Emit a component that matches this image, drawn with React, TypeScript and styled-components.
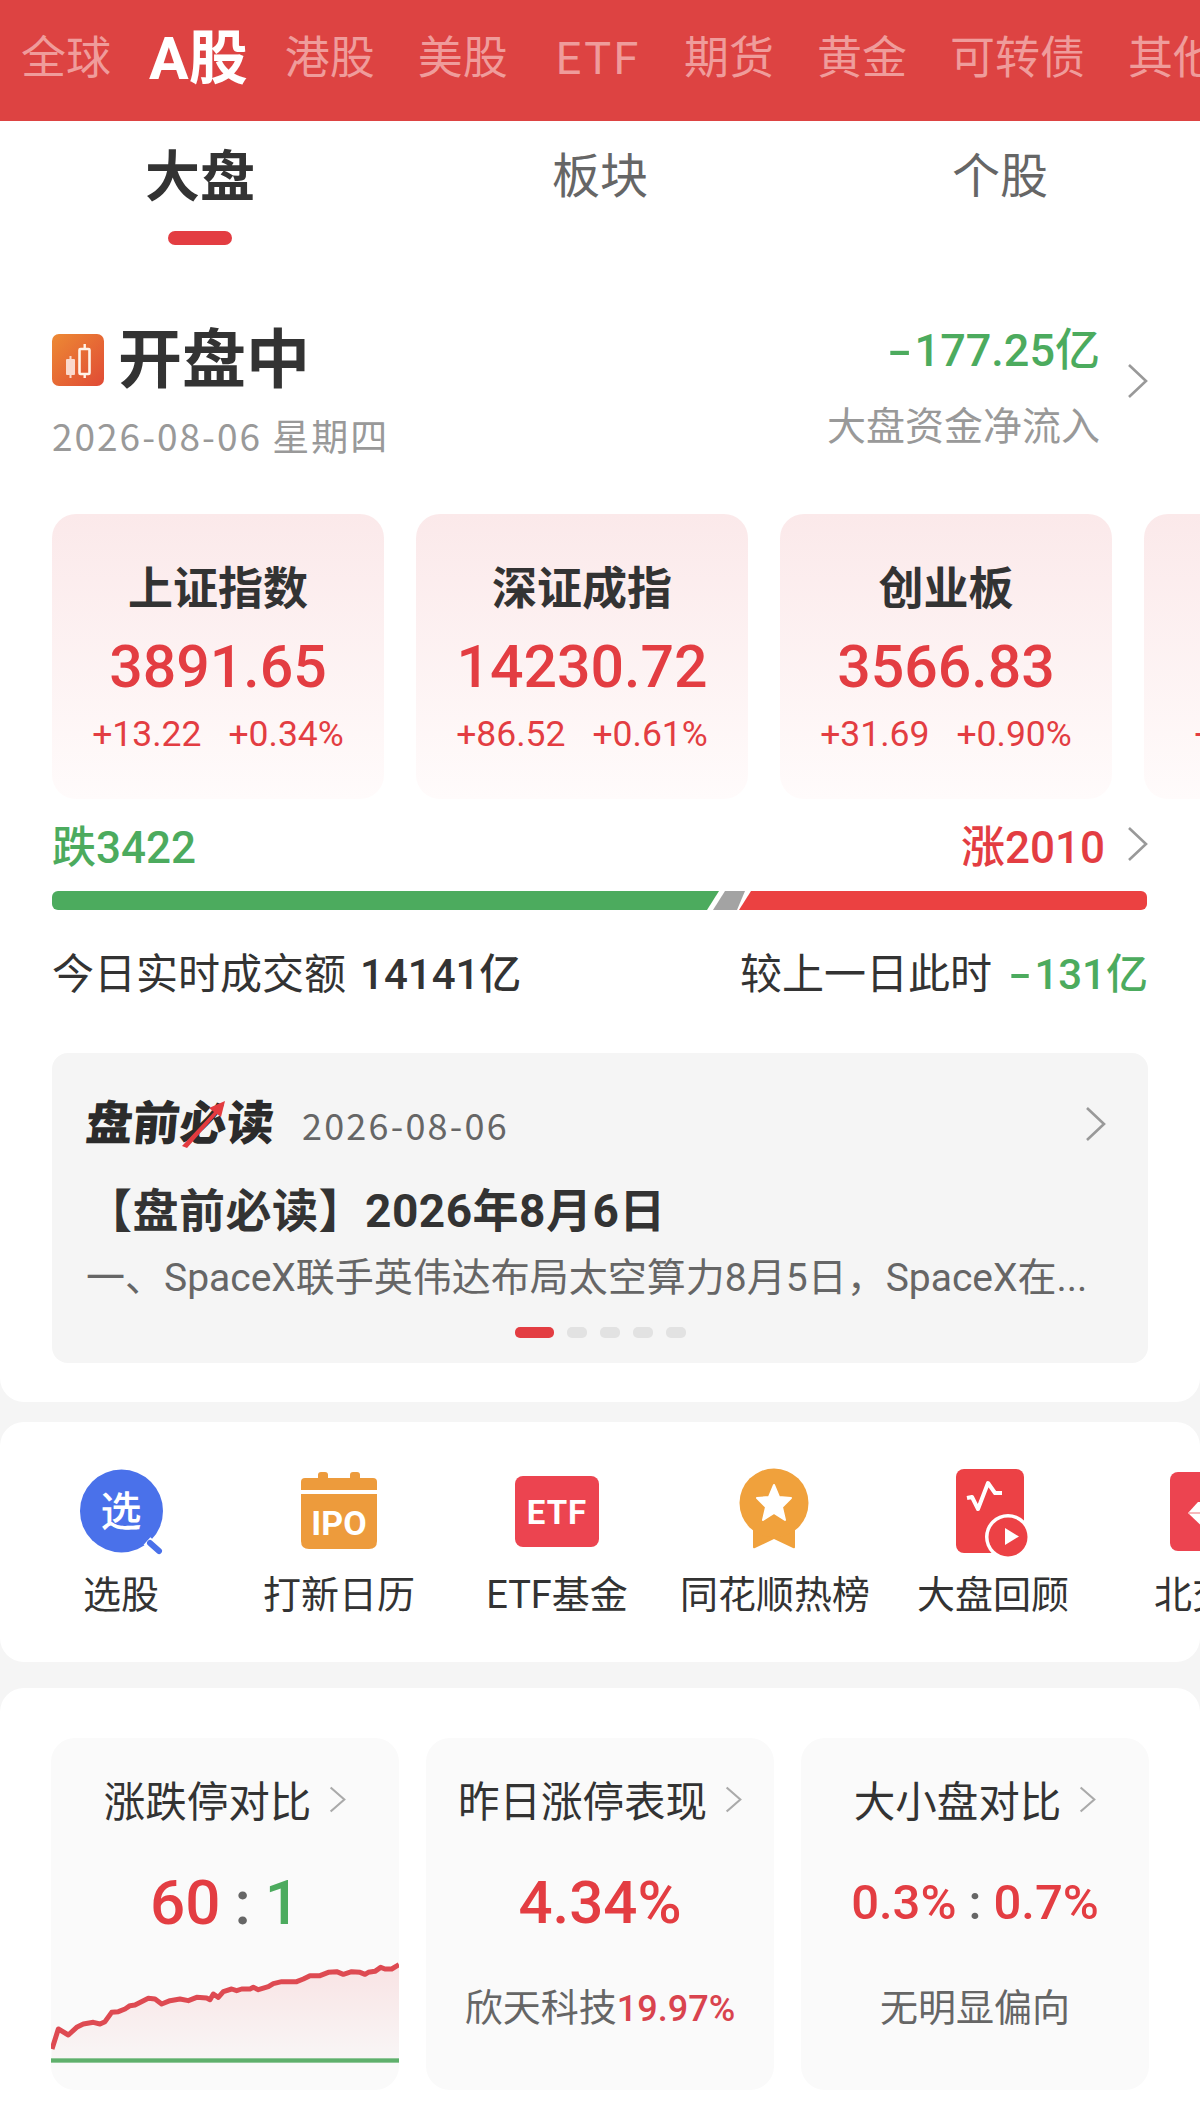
import { createGlobalStyle, styled } from 'styled-components';

const RED = '#e33d42';
const GREEN = '#4cab5e';
const CJK = '"Noto Sans CJK SC"';

const GlobalStyle = createGlobalStyle`
  html, body {
    margin: 0;
    padding: 0;
    background: #f5f5f5;
  }
  body {
    font-family: Roboto, ${CJK}, sans-serif;
    color: #333;
  }
  * {
    box-sizing: border-box;
  }
`;

const Page = styled.div`
  width: 1200px;
  height: 2107px;
  overflow: hidden;
`;

const MarketBar = styled.div`
  height: 121px;
  background: #dd4342;
  display: flex;
  align-items: center;
  gap: 43px;
  padding: 0 0 3px 21px;
  overflow: hidden;
`;

const MarketTab = styled.div<{ $active?: boolean }>`
  flex-shrink: 0;
  font-size: ${(p) => (p.$active ? 59 : 45)}px;
  font-weight: ${(p) => (p.$active ? 700 : 400)};
  color: ${(p) => (p.$active ? '#fff' : '#ef9c9b')};
  line-height: 70px;
  margin: ${(p) => (p.$active ? '0 -6px 0 -5px' : '0')};
`;

const LatinTab = styled(MarketTab)`
  margin-left: 5px;
  letter-spacing: 2.5px;
`;

const TopPanel = styled.section`
  background: #fff;
  border-radius: 0 0 24px 24px;
  padding-bottom: 39px;
`;

const SubTabs = styled.div`
  display: grid;
  grid-template-columns: repeat(3, 400px);
  padding-top: 21px;
`;

const SubTab = styled.div<{ $active?: boolean }>`
  display: flex;
  flex-direction: column;
  align-items: center;
  font-size: ${(p) => (p.$active ? 55 : 48)}px;
  font-weight: ${(p) => (p.$active ? 700 : 400)};
  color: ${(p) => (p.$active ? '#333' : '#666')};
  line-height: 70px;
`;

const SubTabMark = styled.div`
  width: 64px;
  height: 14px;
  margin-top: 19px;
  border-radius: 7px;
  background: ${RED};
`;

const Summary = styled.div`
  display: flex;
  justify-content: space-between;
  height: 187px;
  margin-top: 82px;
  padding: 0 52px;
`;

const StatusRow = styled.div`
  display: flex;
  align-items: center;
  gap: 14px;
  height: 66px;
`;

const StatusText = styled.div`
  padding-top: 2px;
  font-size: 64px;
  font-weight: 700;
  line-height: 66px;
`;

const DateText = styled.div`
  margin-top: 19px;
  font-family: ${CJK}, sans-serif;
  font-size: 37px;
  line-height: 46px;
  letter-spacing: 2px;
  color: #999;
`;

const FlowBlock = styled.div`
  display: flex;
  align-items: flex-start;
  gap: 27px;
`;

const FlowText = styled.div`
  text-align: right;
`;

const FlowValue = styled.div`
  padding-top: 2px;
  font-size: 45px;
  font-weight: 500;
  line-height: 44px;
  color: ${GREEN};
`;

const Dash = styled.span`
  display: inline-block;
  margin: 0 7px;
  transform: scaleX(1.6);
`;

const FlowLabel = styled.div`
  margin-top: 31px;
  font-size: 39px;
  line-height: 46px;
  color: #999;
`;

const ChevronSlot = styled.div`
  padding-top: 36px;
`;

const IndexRow = styled.div`
  display: flex;
  gap: 32px;
  padding-left: 52px;
  overflow: hidden;
`;

const IndexCard = styled.div`
  flex: 0 0 332px;
  height: 285px;
  padding-top: 48px;
  border-radius: 24px;
  background: linear-gradient(180deg, #fbe9ea 0%, #fffbfb 100%);
  display: flex;
  flex-direction: column;
  align-items: center;
`;

const IndexName = styled.div`
  font-size: 45px;
  font-weight: 700;
  line-height: 56px;
`;

const IndexValue = styled.div`
  margin-top: 14px;
  font-size: 59px;
  font-weight: 500;
  line-height: 70px;
  color: ${RED};
`;

const IndexChange = styled.div`
  display: flex;
  gap: 27px;
  margin-top: 10px;
  font-size: 35.5px;
  line-height: 44px;
  color: ${RED};
`;

const BreadthRow = styled.div`
  display: flex;
  justify-content: space-between;
  align-items: center;
  height: 44px;
  margin-top: 23px;
  padding: 0 52px;
  font-size: 44px;
  font-weight: 500;
`;

const Rising = styled.div`
  display: flex;
  align-items: center;
  gap: 22px;
  color: ${RED};
`;

const Falling = styled.div`
  color: ${GREEN};
`;

const BreadthBar = styled.div`
  display: flex;
  height: 19px;
  margin: 25px 52px 0;
`;

const BarFall = styled.div`
  background: ${GREEN};
  border-radius: 6px 0 0 6px;
  clip-path: polygon(0 0, 100% 0, calc(100% - 12px) 100%, 0 100%);
`;

const BarFlat = styled.div`
  margin-left: -6px;
  background: #a3a3a3;
  clip-path: polygon(12px 0, 100% 0, calc(100% - 8px) 100%, 0 100%);
`;

const BarRise = styled.div`
  margin-left: -6px;
  background: #eb4141;
  border-radius: 0 6px 6px 0;
  clip-path: polygon(12px 0, 100% 0, 100% 100%, 0 100%);
`;

const TurnoverRow = styled.div`
  display: flex;
  justify-content: space-between;
  margin-top: 40px;
  padding: 0 52px;
  font-size: 42px;
  line-height: 50px;
`;

const Strong = styled.span<{ $color?: string }>`
  margin-left: 14px;
  font-weight: 500;
  color: ${(p) => p.$color || '#333'};
`;

const ReadCard = styled.div`
  height: 310px;
  margin: 53px 52px 0;
  padding: 46px 42px 0 34px;
  border-radius: 16px;
  background: #f5f5f5;
`;

const ReadHead = styled.div`
  display: flex;
  align-items: center;
  height: 49px;
`;

const ReadLogo = styled.div`
  position: relative;
  width: 188px;
  font-size: 47px;
  font-weight: 900;
  line-height: 49px;
  white-space: nowrap;
  color: #2b2b2b;
`;

const LogoWord = styled.span`
  display: inline-block;
  transform: skewX(-5deg);
`;

const LogoSlash = styled.svg`
  position: absolute;
  left: 94px;
  top: 0;
`;

const ReadDate = styled.div`
  flex: 1;
  margin-left: 28px;
  font-family: ${CJK}, sans-serif;
  font-size: 36px;
  letter-spacing: 2.2px;
  color: #666;
`;

const ReadTitle = styled.div`
  margin-top: 37px;
  font-size: 46px;
  font-weight: 700;
  line-height: 52px;
  letter-spacing: 0.5px;
  white-space: nowrap;
`;

const ReadBody = styled.div`
  margin-top: 16px;
  font-size: 39px;
  line-height: 50px;
  white-space: nowrap;
  color: #666;
`;

const Dots = styled.div`
  display: flex;
  justify-content: center;
  gap: 13px;
  margin-top: 24px;
  padding-left: 8px;
`;

const Dot = styled.div<{ $active?: boolean }>`
  width: ${(p) => (p.$active ? 39 : 20)}px;
  height: 11px;
  border-radius: 5px;
  background: ${(p) => (p.$active ? RED : '#e2e2e2')};
`;

const ToolPanel = styled.section`
  display: flex;
  height: 240px;
  margin-top: 20px;
  padding: 45px 0 0 12px;
  border-radius: 24px;
  background: #fff;
  overflow: hidden;
`;

const Tool = styled.div`
  flex: 0 0 218px;
  display: flex;
  flex-direction: column;
  align-items: center;
`;

const ToolLabel = styled.div`
  margin-top: 14px;
  font-size: 38px;
  line-height: 44px;
  white-space: nowrap;
`;

const StatsPanel = styled.section`
  display: grid;
  grid-template-columns: repeat(3, 348px);
  gap: 27px;
  height: 419px;
  margin-top: 26px;
  padding: 50px 0 0 51px;
  border-radius: 24px 24px 0 0;
  background: #fff;
`;

const StatCard = styled.div`
  height: 352px;
  padding-top: 38px;
  border-radius: 24px;
  background: #fafafa;
  overflow: hidden;
  display: flex;
  flex-direction: column;
  align-items: center;
`;

const StatTitle = styled.div`
  display: flex;
  align-items: center;
  gap: 18px;
  height: 46px;
  font-size: 41.5px;
  white-space: nowrap;
`;

const StatValue = styled.div<{ $size: number }>`
  display: flex;
  align-items: center;
  justify-content: center;
  height: 72px;
  margin-top: 44px;
  font-size: ${(p) => p.$size}px;
  font-weight: 500;
  color: ${RED};
  white-space: nowrap;
`;

const Colon = styled.span<{ $gap: number }>`
  margin: 0 ${(p) => p.$gap}px;
  color: #666;
`;

const GreenNum = styled.span`
  color: ${GREEN};
`;

const StatNote = styled.div`
  margin-top: 47px;
  font-size: 38px;
  line-height: 46px;
  color: #666;
  white-space: nowrap;
`;

const NoteNum = styled.span`
  font-size: 36px;
  font-weight: 500;
  color: #d9434e;
`;

const Spark = styled.svg`
  display: block;
  flex-shrink: 0;
  margin-top: 21px;
`;

const Chevron = ({ w = 21, h = 36, color = '#999' }: { w?: number; h?: number; color?: string }) => (
  <svg width={w} height={h} viewBox="0 0 21 36" preserveAspectRatio="none">
    <polyline points="2,2 19,18 2,34" fill="none" stroke={color} strokeWidth="2.6" />
  </svg>
);

const CandleIcon = () => (
  <svg width="52" height="52" viewBox="0 0 52 52">
    <defs>
      <linearGradient id="candle" x1="0" y1="0" x2="1" y2="1">
        <stop offset="0" stopColor="#ed8a34" />
        <stop offset="1" stopColor="#e04a35" />
      </linearGradient>
    </defs>
    <rect width="52" height="52" rx="7" fill="url(#candle)" />
    <rect x="14" y="25" width="9" height="16" rx="1" fill="#fbd9cc" />
    <rect x="17.5" y="22" width="2" height="22" fill="#fbd9cc" />
    <rect x="27.5" y="15" width="10" height="25" rx="1" fill="none" stroke="#fff3e8" strokeWidth="2.6" />
    <rect x="31.5" y="10" width="2.4" height="5" fill="#fff3e8" />
    <rect x="31.5" y="40" width="2.4" height="4" fill="#fff3e8" />
  </svg>
);

const PickIcon = () => (
  <svg width="92" height="92" viewBox="0 0 92 92">
    <circle cx="46.5" cy="44" r="41.5" fill="#4a71ea" />
    <path d="M72 74 L84 85" stroke="#fff" strokeWidth="10" />
    <path d="M75 76 L84 84" stroke="#4a71ea" strokeWidth="6" strokeLinecap="round" />
    <text x="46" y="59" textAnchor="middle" fontSize="41" fontWeight="500" fill="#fff" fontFamily={CJK}>选</text>
  </svg>
);

const IpoIcon = () => (
  <svg width="92" height="92" viewBox="0 0 92 92">
    <rect x="25" y="5" width="10" height="10" rx="3" fill="#ed9b3c" />
    <rect x="57" y="5" width="10" height="10" rx="3" fill="#ed9b3c" />
    <path d="M12 11 H80 Q84 11 84 15 V23 H8 V15 Q8 11 12 11 Z" fill="#ed9b3c" />
    <path d="M8 27 H84 V74 Q84 82 76 82 H16 Q8 82 8 74 Z" fill="#ed9b3c" />
    <text x="46" y="68" textAnchor="middle" fontSize="34" fontWeight="700" fill="#fff" fontFamily="Roboto">IPO</text>
  </svg>
);

const EtfIcon = () => (
  <svg width="92" height="92" viewBox="0 0 92 92">
    <rect x="4" y="9" width="84" height="71" rx="8" fill="#ec4450" />
    <text x="46" y="57" textAnchor="middle" fontSize="33" fontWeight="700" letterSpacing="1" fill="#fff" fontFamily="Roboto">ETF</text>
  </svg>
);

const MedalIcon = () => (
  <svg width="92" height="92" viewBox="0 0 92 92">
    <path d="M24 52 V80 Q24 82 26 81 L45 72 L64 81 Q66 82 66 80 V52 Z" fill="#f0a13c" />
    <circle cx="45" cy="36" r="34.5" fill="#f0a13c" />
    <path
      d="M45 18 L50 30 L62 31 L53 40 L56 53 L45 46 L34 53 L37 40 L28 31 L40 30 Z"
      fill="#fff"
      stroke="#fff"
      strokeWidth="2"
      strokeLinejoin="round"
    />
  </svg>
);

const ReviewIcon = () => (
  <svg width="92" height="92" viewBox="0 0 92 92">
    <rect x="9" y="2" width="68" height="84" rx="8" fill="#ec4145" />
    <polyline points="20,31 25,30 31,42 41,16 48,26 55,26" fill="none" stroke="#fff" strokeWidth="4" strokeLinejoin="round" />
    <circle cx="61" cy="70" r="23" fill="#fff" />
    <circle cx="61" cy="70" r="19.5" fill="#ec4145" />
    <path d="M58 61 L72 69.5 L58 78 Z" fill="#fff" />
  </svg>
);

const BeijingIcon = () => (
  <svg width="92" height="92" viewBox="0 0 92 92">
    <rect x="5" y="5" width="80" height="79" rx="8" fill="#ec4450" />
    <path d="M33 35 H59 L69 46 L46 68 L23 46 Z" fill="#fff" />
    <path d="M23 46 H69" stroke="#f4a0a5" strokeWidth="1.5" />
  </svg>
);

const sparkPoints =
  '36,330 55,270 85,288 110,265 130,255 160,250 180,255 195,248 215,220 235,218 255,210 270,200 285,198 325,178 345,180 365,195 390,185 420,180 445,185 470,175 500,177 510,182 520,165 535,175 550,158 575,150 590,155 605,150 630,150 640,145 655,152 685,143 700,134 725,128 770,128 790,120 810,110 840,110 865,100 890,98 910,106 935,98 960,100 975,106 985,100 1005,97 1022,85 1035,90 1055,90 1077,77';

const SparkChart = () => (
  <Spark width="348" height="105" viewBox="33 60 1044 315">
    <defs>
      <linearGradient id="sparkFill" x1="0" y1="0" x2="0" y2="1">
        <stop offset="0" stopColor="#f9e3e4" />
        <stop offset="1" stopColor="#f9f6f6" />
      </linearGradient>
    </defs>
    <polygon points={`${sparkPoints} 1077,360 36,360`} fill="url(#sparkFill)" />
    <polyline points={sparkPoints} fill="none" stroke="#de4a52" strokeWidth="15" strokeLinejoin="round" />
    <rect x="33" y="358" width="1044" height="13" fill="#5fb06c" />
  </Spark>
);

const marketTabs = ['全球', 'A股', '港股', '美股', 'ETF', '期货', '黄金', '可转债', '其他'];

const indexes = [
  { name: '上证指数', value: '3891.65', change: '+13.22', pct: '+0.34%' },
  { name: '深证成指', value: '14230.72', change: '+86.52', pct: '+0.61%' },
  { name: '创业板', value: '3566.83', change: '+31.69', pct: '+0.90%' },
  { name: '科创50', value: '1325.40', change: '+9.34', pct: '+0.71%' },
];

const tools = [
  { label: '选股', icon: <PickIcon /> },
  { label: '打新日历', icon: <IpoIcon /> },
  { label: 'ETF基金', icon: <EtfIcon /> },
  { label: '同花顺热榜', icon: <MedalIcon /> },
  { label: '大盘回顾', icon: <ReviewIcon /> },
  { label: '北交所', icon: <BeijingIcon /> },
];

const App = () => {
  return (
    <Page>
      <GlobalStyle />
      <MarketBar>
        {marketTabs.map((t) =>
          t === 'ETF' ? (
            <LatinTab key={t}>{t}</LatinTab>
          ) : (
            <MarketTab key={t} $active={t === 'A股'}>
              {t}
            </MarketTab>
          ),
        )}
      </MarketBar>

      <TopPanel>
        <SubTabs>
          <SubTab $active>
            大盘
            <SubTabMark />
          </SubTab>
          <SubTab>板块</SubTab>
          <SubTab>个股</SubTab>
        </SubTabs>

        <Summary>
          <div>
            <StatusRow>
              <CandleIcon />
              <StatusText>开盘中</StatusText>
            </StatusRow>
            <DateText>2026-08-06 星期四</DateText>
          </div>
          <FlowBlock>
            <FlowText>
              <FlowValue>
                <Dash>-</Dash>177.25亿
              </FlowValue>
              <FlowLabel>大盘资金净流入</FlowLabel>
            </FlowText>
            <ChevronSlot>
              <Chevron />
            </ChevronSlot>
          </FlowBlock>
        </Summary>

        <IndexRow>
          {indexes.map((i) => (
            <IndexCard key={i.name}>
              <IndexName>{i.name}</IndexName>
              <IndexValue>{i.value}</IndexValue>
              <IndexChange>
                <span>{i.change}</span>
                <span>{i.pct}</span>
              </IndexChange>
            </IndexCard>
          ))}
        </IndexRow>

        <BreadthRow>
          <Falling>跌3422</Falling>
          <Rising>
            涨2010
            <Chevron />
          </Rising>
        </BreadthRow>
        <BreadthBar>
          <BarFall style={{ width: 667 }} />
          <BarFlat style={{ width: 32 }} />
          <BarRise style={{ width: 408 }} />
        </BreadthBar>

        <TurnoverRow>
          <div>
            今日实时成交额<Strong>14141亿</Strong>
          </div>
          <div>
            较上一日此时
            <Strong $color={GREEN}>
              <Dash>-</Dash>131亿
            </Strong>
          </div>
        </TurnoverRow>

        <ReadCard>
          <ReadHead>
            <ReadLogo>
              <LogoWord>盘前必读</LogoWord>
              <LogoSlash width="48" height="49" viewBox="0 0 48 49">
                <path d="M2 47 L34 13 L29 9 L45 2 L41 18 L37 15 L7 49 Z" fill="#e33b3f" />
              </LogoSlash>
            </ReadLogo>
            <ReadDate>2026-08-06</ReadDate>
            <Chevron />
          </ReadHead>
          <ReadTitle>【盘前必读】2026年8月6日</ReadTitle>
          <ReadBody>一、SpaceX联手英伟达布局太空算力8月5日，SpaceX在...</ReadBody>
          <Dots>
            <Dot $active />
            <Dot />
            <Dot />
            <Dot />
            <Dot />
          </Dots>
        </ReadCard>
      </TopPanel>

      <ToolPanel>
        {tools.map((t) => (
          <Tool key={t.label}>
            {t.icon}
            <ToolLabel>{t.label}</ToolLabel>
          </Tool>
        ))}
      </ToolPanel>

      <StatsPanel>
        <StatCard>
          <StatTitle>
            涨跌停对比
            <Chevron w={17} h={27} color="#aaa" />
          </StatTitle>
          <StatValue $size={62}>
            60<Colon $gap={14}>:</Colon>
            <GreenNum>1</GreenNum>
          </StatValue>
          <SparkChart />
        </StatCard>
        <StatCard>
          <StatTitle>
            昨日涨停表现
            <Chevron w={17} h={27} color="#aaa" />
          </StatTitle>
          <StatValue $size={60}>4.34%</StatValue>
          <StatNote>
            欣天科技<NoteNum>19.97%</NoteNum>
          </StatNote>
        </StatCard>
        <StatCard>
          <StatTitle>
            大小盘对比
            <Chevron w={17} h={27} color="#aaa" />
          </StatTitle>
          <StatValue $size={49}>
            0.3%<Colon $gap={12}>:</Colon>0.7%
          </StatValue>
          <StatNote>无明显偏向</StatNote>
        </StatCard>
      </StatsPanel>
    </Page>
  );
};

export default App;
